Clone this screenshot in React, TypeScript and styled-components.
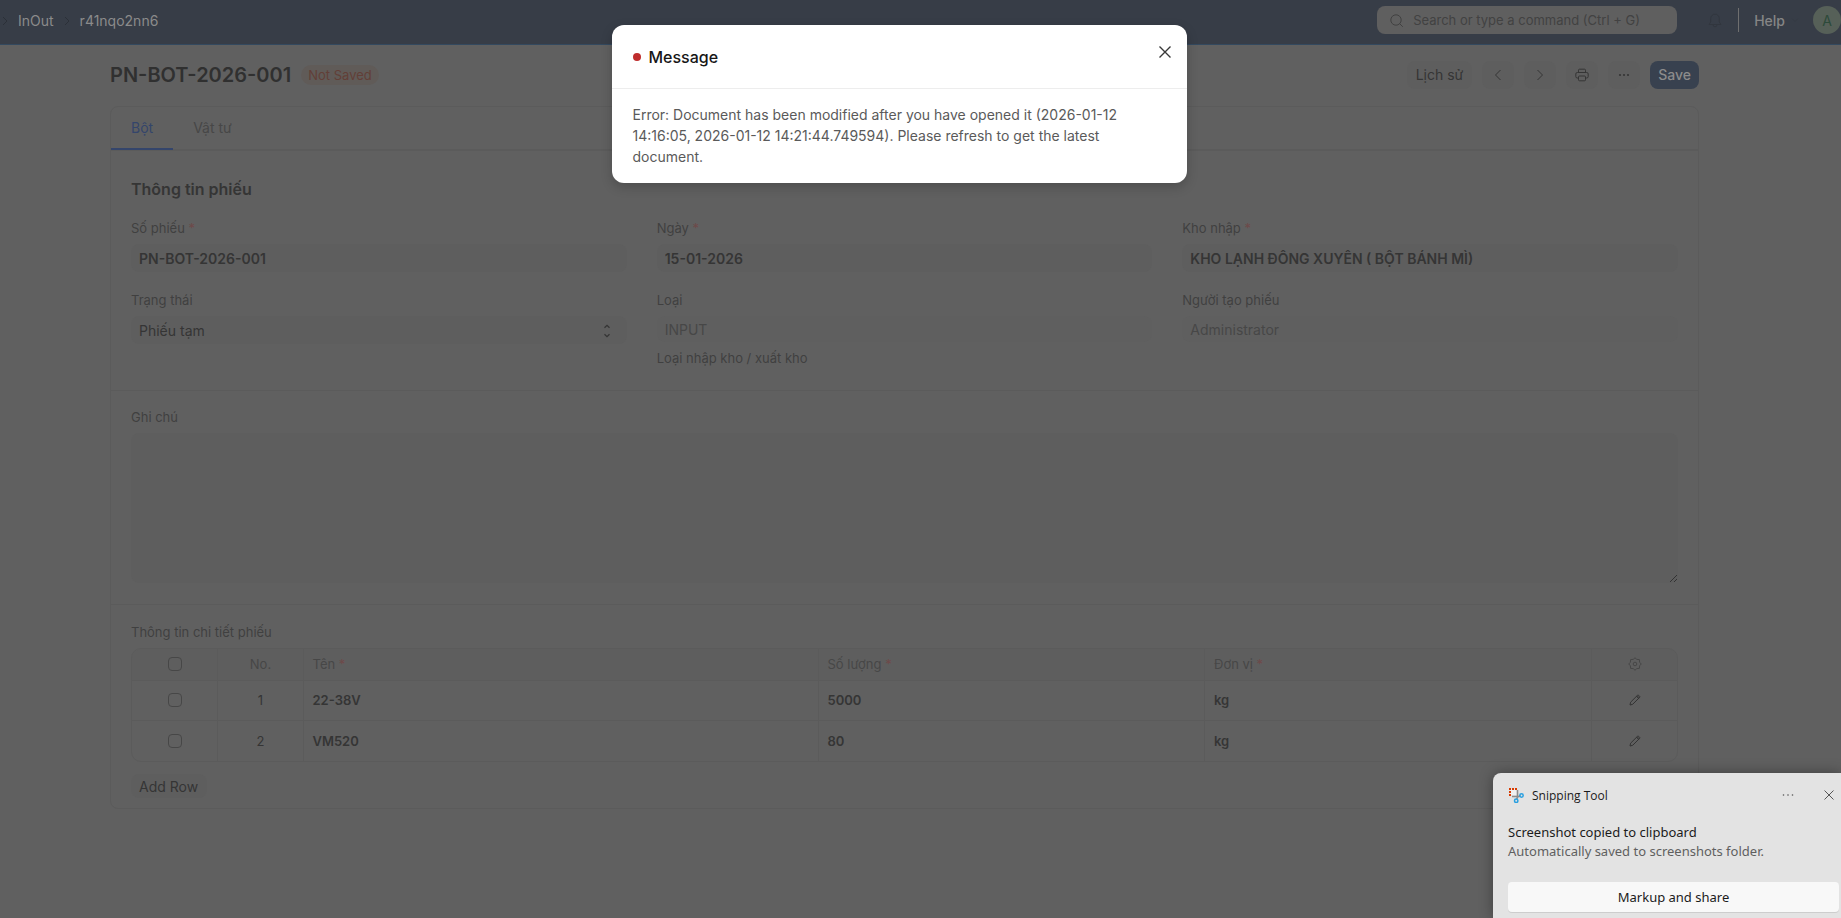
import React from "react";
import styled, { createGlobalStyle } from "styled-components";

const c = {
  page: "#606060",
  nav: "#373d47",
  navLine: "#33495f",
  line: "#5b5b5b",
  control: "#5e5e5e",
  ink: "#353535",
  label: "#404040",
  muted: "#474747",
  red: "#6e4949",
};

const Global = createGlobalStyle`
  * { box-sizing: border-box; }
  html, body { margin: 0; min-height: 100%; background: ${c.page}; }
  body, button, input, select, textarea { font-family: Inter, "Liberation Sans", sans-serif; }
  body { color: ${c.ink}; font-size: 14px; overflow: hidden; }
  button { border: 0; padding: 0; background: none; cursor: pointer; color: inherit; }
  svg { display: block; flex: none; }
`;

const Screen = styled.div`
  position: relative;
  min-height: 100vh;
`;

const Navbar = styled.header`
  display: flex;
  align-items: center;
  height: 45px;
  padding-bottom: 4px;
  background: ${c.nav};
  border-bottom: 1px solid ${c.navLine};
`;

const Crumbs = styled.nav`
  display: flex;
  align-items: center;
  flex: 1;
  padding-top: 2px;
`;

const Crumb = styled.a`
  color: #8b8b8b;
  text-decoration: none;
  font-size: 14px;
  line-height: 20px;
`;

const CrumbArrow = styled.svg<{ $first?: boolean }>`
  width: 6px;
  height: 10px;
  margin: 0 10px 0 ${(p) => (p.$first ? 2 : 10)}px;
  fill: none;
  stroke: #2b3038;
`;

const Search = styled.label`
  display: flex;
  align-items: center;
  width: 300px;
  height: 28px;
  margin-right: 30px;
  padding: 0 13px;
  gap: 10px;
  border-radius: 8px;
  background: #5f5f5f;
  color: #414141;
`;

const SearchInput = styled.input`
  flex: 1;
  min-width: 0;
  border: 0;
  padding: 0;
  background: none;
  font-size: 13px;
  color: #404040;
  &::placeholder { color: #424242; opacity: 1; }
`;

const BellButton = styled.button`
  width: 16px;
  height: 16px;
  color: #31363e;
`;

const NavRule = styled.span`
  width: 1px;
  height: 24px;
  margin: 0 15px;
  background: #6f6f6f;
`;

const HelpButton = styled.button`
  display: flex;
  align-items: center;
  gap: 6px;
  margin-right: 14px;
  font-size: 14px;
  font-weight: 500;
  color: #858585;
`;

const Avatar = styled.button`
  width: 28px;
  height: 28px;
  border-radius: 50%;
  background: #566058;
  color: #2c4a3a;
  font-size: 14px;
`;

const Container = styled.div`
  padding: 0 142px 0 110px;
`;

const PageHead = styled.div`
  display: flex;
  align-items: center;
  height: 61px;
  padding-bottom: 2px;
`;

const Title = styled.h1`
  margin: 0;
  font-size: 20px;
  line-height: 28px;
  font-weight: 600;
  color: #303030;
`;

const Pill = styled.span`
  margin: 0 auto 0 10px;
  padding: 0 7px;
  border-radius: 10px;
  background: #605b58;
  color: #623f37;
  font-size: 13px;
  line-height: 20px;
`;

const Actions = styled.div`
  display: flex;
  gap: 10px;
`;

const ActionButton = styled.button<{ $primary?: boolean; $icon?: boolean }>`
  display: flex;
  align-items: center;
  justify-content: center;
  height: 28px;
  width: ${(p) => (p.$icon ? "32px" : "auto")};
  padding: 0 ${(p) => (p.$icon ? 0 : p.$primary ? 8 : 9)}px;
  border-radius: 8px;
  font-size: 14px;
  font-weight: ${(p) => (p.$primary ? 500 : 400)};
  background: ${(p) => (p.$primary ? "#38414f" : c.control)};
  color: ${(p) => (p.$primary ? "#8b8b8b" : c.ink)};
`;

const Card = styled.main`
  border: 1px solid ${c.line};
  border-radius: 8px;
`;

const Tabs = styled.div`
  display: flex;
  height: 44px;
  border-bottom: 2px solid ${c.line};
`;

const Tab = styled.button<{ $active?: boolean }>`
  height: 43px;
  padding: 0 20px 1px;
  border-bottom: 2px solid ${(p) => (p.$active ? "#34456b" : "transparent")};
  font-size: 14px;
  color: ${(p) => (p.$active ? "#34456b" : c.muted)};
`;

const Section = styled.section<{ $top: number; $bottom: number }>`
  padding: ${(p) => p.$top}px 20px ${(p) => p.$bottom}px;
  & + & { border-top: 1px solid ${c.line}; }
`;

const SectionTitle = styled.h2`
  margin: 0 0 21px;
  font-size: 16px;
  line-height: 20px;
  font-weight: 600;
  color: ${c.ink};
`;

const FieldGrid = styled.div`
  display: grid;
  grid-template-columns: repeat(3, 1fr);
  gap: 20px 30px;
`;

const Field = styled.div`
  display: flex;
  flex-direction: column;
`;

const Label = styled.label`
  margin-bottom: 8px;
  font-size: 13px;
  line-height: 16px;
  color: ${c.label};
`;

const Star = styled.span`
  color: ${c.red};
`;

const Input = styled.input<{ $quiet?: boolean }>`
  width: 100%;
  height: ${(p) => (p.$quiet ? 26 : 28)}px;
  padding: 0 8px;
  border: 0;
  border-radius: 8px;
  background: ${(p) => (p.$quiet ? "#5f5f5f" : c.control)};
  font-size: 14px;
  font-weight: ${(p) => (p.$quiet ? 400 : 600)};
  color: ${(p) => (p.$quiet ? c.muted : c.ink)};
`;

const SelectWrap = styled.div`
  position: relative;
`;

const Select = styled.select`
  appearance: none;
  width: 100%;
  height: 28px;
  padding: 0 8px;
  border: 0;
  border-radius: 8px;
  background: ${c.control};
  font-size: 14px;
  color: ${c.ink};
`;

const SelectArrows = styled.svg`
  position: absolute;
  right: 16px;
  top: 8px;
  pointer-events: none;
`;

const Help = styled.p`
  margin: 8px 0 0;
  font-size: 13px;
  line-height: 16px;
  color: ${c.label};
`;

const Notes = styled.textarea`
  display: block;
  width: 100%;
  height: 150px;
  border: 0;
  border-radius: 8px;
  background: ${c.control};
  resize: none;
`;

const NotesWrap = styled.div`
  position: relative;
`;

const Grip = styled.svg`
  position: absolute;
  right: 0;
  bottom: 0;
`;

const GridFrame = styled.div`
  border: 1px solid ${c.line};
  border-radius: 10px;
  overflow: hidden;
`;

const Table = styled.table`
  width: 100%;
  table-layout: fixed;
  border-collapse: collapse;
  font-size: 13px;
  thead tr { height: 31px; background: #5e5e5e; }
  tbody tr { height: 40px; border-top: 1px solid ${c.line}; }
  tbody tr:last-child { height: 41px; }
`;

const Cell = styled.td<{ $center?: boolean; $bold?: boolean; $muted?: boolean }>`
  padding: 0 8px 0 9px;
  text-align: ${(p) => (p.$center ? "center" : "left")};
  font-weight: ${(p) => (p.$bold ? 600 : 400)};
  color: ${(p) => (p.$muted ? c.muted : c.ink)};
  & + & { border-left: 1px solid ${c.line}; }
  svg { margin: 0 auto; }
`;

const Check = styled.input`
  appearance: none;
  display: block;
  width: 14px;
  height: 14px;
  margin: 0 auto;
  border: 1px solid #474747;
  border-radius: 4px;
`;

const AddRow = styled.button`
  height: 24px;
  margin-top: 12px;
  padding: 0 9px 0 8px;
  border-radius: 8px;
  background: ${c.control};
  font-size: 14px;
  color: ${c.ink};
`;

const Dialog = styled.div`
  position: absolute;
  top: 25px;
  left: calc(50% - 309px);
  width: 575px;
  border-radius: 12px;
  background: #fff;
  box-shadow: 0 4px 12px rgba(0, 0, 0, 0.2);
`;

const DialogHead = styled.div`
  display: flex;
  align-items: center;
  height: 64px;
  padding: 0 14px 0 21px;
  border-bottom: 1px solid #ededed;
`;

const Dot = styled.span`
  width: 8px;
  height: 8px;
  margin-right: 8px;
  border-radius: 50%;
  background: #bf2d2d;
`;

const DialogTitle = styled.h2`
  flex: 1;
  margin: 0;
  font-size: 16px;
  line-height: 24px;
  font-weight: 500;
  color: #171717;
`;

const CloseButton = styled.button`
  align-self: flex-start;
  padding-top: 19px;
  color: #383838;
`;

const DialogBody = styled.p`
  margin: 0;
  padding: 15px 60px 16px 21px;
  font-size: 14px;
  line-height: 21px;
  color: #5a5a5a;
`;

const Toast = styled.aside`
  position: absolute;
  right: 0;
  bottom: 0;
  width: 348px;
  padding: 12px 2px 6px 15px;
  border-top-left-radius: 8px;
  background: #e3e3e3;
  box-shadow: 0 0 14px rgba(0, 0, 0, 0.35);
  font-family: "Noto Sans", "Open Sans", sans-serif;
  color: #1b1b1b;
`;

const ToastHead = styled.div`
  display: flex;
  align-items: center;
  height: 20px;
  gap: 8px;
  padding-right: 5px;
  font-family: "Open Sans", "Noto Sans", sans-serif;
  font-size: 12px;
`;

const ToastName = styled.span`
  flex: 1;
`;

const ToastIcon = styled.button`
  color: #555;
  margin-left: 22px;
`;

const ToastTitle = styled.p`
  margin: 18px 0 0;
  font-size: 13px;
  line-height: 19px;
`;

const ToastText = styled(ToastTitle)`
  margin: 0 0 21px;
  color: #5f5f5f;
`;

const ToastButton = styled.button`
  width: 100%;
  height: 30px;
  border-radius: 4px;
  background: #f8f8f8;
  box-shadow: 0 1px 0 #cdcdcd;
  font-family: inherit;
  font-size: 13px;
  color: #1b1b1b;
`;

const Gear = () => (
  <svg width="14" height="14" viewBox="0 0 14 14" fill="none" stroke={c.muted} strokeLinejoin="round">
    <path d="M7 .7L8.600 2.400L11.400 2.600L11.600 5.400L13.300 7L11.600 8.600L11.400 11.400L8.600 11.600L7 13.300L5.400 11.600L2.600 11.400L2.400 8.600L.7 7L2.400 5.400L2.600 2.600L5.400 2.400z" />
    <circle cx="7" cy="7" r="1.800" />
  </svg>
);

const Pencil = () => (
  <svg width="12" height="12" viewBox="0 0 12 12" fill="none" stroke="#333" strokeLinejoin="round">
    <path d="M1 11l.6-2.800L8.500 1.300a.8.8 0 0 1 1.100 0l1 1a.8.8 0 0 1 0 1.100L3.700 10.300z" />
    <path d="M7.500 2.300l2.200 2.200M8.300 1.900l1.900 1.900" />
  </svg>
);

const rows = [
  { no: 1, name: "22-38V", qty: "5000", unit: "kg" },
  { no: 2, name: "VM520", qty: "80", unit: "kg" },
];

const fields = [
  { id: "no", label: "Số phiếu", value: "PN-BOT-2026-001" },
  { id: "date", label: "Ngày", value: "15-01-2026" },
  { id: "store", label: "Kho nhập", value: "KHO LẠNH ĐÔNG XUYÊN ( BỘT BÁNH MÌ)" },
];

export default function App() {
  return (
    <Screen>
      <Global />
      <Navbar>
        <Crumbs aria-label="Breadcrumb">
          <CrumbArrow $first viewBox="0 0 6 10"><path d="M1 1l4 4-4 4" /></CrumbArrow>
          <Crumb href="#">InOut</Crumb>
          <CrumbArrow viewBox="0 0 6 10"><path d="M1 1l4 4-4 4" /></CrumbArrow>
          <Crumb href="#">r41nqo2nn6</Crumb>
        </Crumbs>
        <Search>
          <svg width="13" height="13" viewBox="0 0 13 13" fill="none" stroke="currentColor">
            <circle cx="6" cy="6" r="5.200" />
            <path d="M9.800 9.800L12.500 12.500" strokeLinecap="round" />
          </svg>
          <SearchInput aria-label="Search" placeholder="Search or type a command (Ctrl + G)" />
        </Search>
        <BellButton aria-label="Notifications">
          <svg width="16" height="16" viewBox="0 0 16 16" fill="none" stroke="currentColor">
            <path d="M2 12.500h12l-1.700-2.500V6.500a4.300 4.300 0 0 0-8.600 0V10zM6 12.800a2 2 0 0 0 4 0" />
          </svg>
        </BellButton>
        <NavRule />
        <HelpButton>
          Help
          <svg width="8" height="8" viewBox="0 0 8 8" fill="none" stroke="#343a43"><path d="M1 2.500l3 3 3-3" /></svg>
        </HelpButton>
        <Avatar aria-label="Account">A</Avatar>
      </Navbar>

      <Container>
        <PageHead>
          <Title>PN-BOT-2026-001</Title>
          <Pill>Not Saved</Pill>
          <Actions>
            <ActionButton>Lịch sử</ActionButton>
            <ActionButton $icon aria-label="Previous">
              <svg width="8" height="12" viewBox="0 0 8 12" fill="none" stroke="currentColor"><path d="M6.500 1L1.500 6l5 5" /></svg>
            </ActionButton>
            <ActionButton $icon aria-label="Next">
              <svg width="8" height="12" viewBox="0 0 8 12" fill="none" stroke="currentColor"><path d="M1.500 1l5 5-5 5" /></svg>
            </ActionButton>
            <ActionButton $icon aria-label="Print">
              <svg width="14" height="14" viewBox="0 0 14 14" fill="none" stroke="currentColor">
                <path d="M3.500 4.500V2.200a1 1 0 0 1 1-1h5a1 1 0 0 1 1 1v2.300M3.500 10H2.300A1.500 1.500 0 0 1 .8 8.500V6a1.500 1.500 0 0 1 1.500-1.500h9.400A1.500 1.500 0 0 1 13.200 6v2.500a1.500 1.500 0 0 1-1.500 1.500h-1.200" />
                <rect x="3.500" y="8" width="7" height="4.800" rx="1" />
              </svg>
            </ActionButton>
            <ActionButton $icon aria-label="More">
              <svg width="12" height="4" viewBox="0 0 12 4" fill="currentColor"><circle cx="2" cy="2" r="1.100" /><circle cx="6" cy="2" r="1.100" /><circle cx="10" cy="2" r="1.100" /></svg>
            </ActionButton>
            <ActionButton $primary>Save</ActionButton>
          </Actions>
        </PageHead>

        <Card>
          <Tabs role="tablist">
            <Tab $active role="tab" aria-selected="true">Bột</Tab>
            <Tab role="tab" aria-selected="false">Vật tư</Tab>
          </Tabs>
          <Section $top={28} $bottom={24}>
            <SectionTitle>Thông tin phiếu</SectionTitle>
            <FieldGrid>
              {fields.map((f) => (
                <Field key={f.id}>
                  <Label htmlFor={f.id}>{f.label} <Star>*</Star></Label>
                  <Input id={f.id} defaultValue={f.value} />
                </Field>
              ))}
              <Field>
                <Label htmlFor="status">Trạng thái</Label>
                <SelectWrap>
                  <Select id="status"><option>Phiếu tạm</option></Select>
                  <SelectArrows width="8" height="14" viewBox="0 0 8 14" fill="none" stroke={c.ink} strokeWidth="1.300">
                    <path d="M1.500 3.800L4 1.300l2.500 2.500M1.500 10.200L4 12.700l2.500-2.500" />
                  </SelectArrows>
                </SelectWrap>
              </Field>
              <Field>
                <Label htmlFor="kind">Loại</Label>
                <Input id="kind" $quiet readOnly value="INPUT" />
                <Help>Loại nhập kho / xuất kho</Help>
              </Field>
              <Field>
                <Label htmlFor="creator">Người tạo phiếu</Label>
                <Input id="creator" $quiet readOnly value="Administrator" />
              </Field>
            </FieldGrid>
          </Section>
          <Section $top={18} $bottom={21}>
            <Field>
              <Label htmlFor="notes">Ghi chú</Label>
              <NotesWrap>
                <Notes id="notes" />
                <Grip width="10" height="10" viewBox="0 0 10 10" stroke="#333"><path d="M2 9l7-7M6 9l3-3" /></Grip>
              </NotesWrap>
            </Field>
          </Section>
          <Section $top={19} $bottom={10}>
            <Field>
              <Label as="div">Thông tin chi tiết phiếu</Label>
              <GridFrame>
                <Table>
                  <colgroup>
                    <col style={{ width: 85 }} />
                    <col style={{ width: 86 }} />
                    <col style={{ width: 515 }} />
                    <col />
                    <col />
                    <col style={{ width: 86 }} />
                  </colgroup>
                  <thead>
                    <tr>
                      <Cell as="th" $muted><Check type="checkbox" aria-label="Select all" /></Cell>
                      <Cell as="th" $center $muted>No.</Cell>
                      <Cell as="th" $muted>Tên <Star>*</Star></Cell>
                      <Cell as="th" $muted>Số lượng <Star>*</Star></Cell>
                      <Cell as="th" $muted>Đơn vị <Star>*</Star></Cell>
                      <Cell as="th" $muted><Gear /></Cell>
                    </tr>
                  </thead>
                  <tbody>
                    {rows.map((r) => (
                      <tr key={r.no}>
                        <Cell><Check type="checkbox" aria-label={`Select row ${r.no}`} /></Cell>
                        <Cell $center>{r.no}</Cell>
                        <Cell $bold>{r.name}</Cell>
                        <Cell $bold>{r.qty}</Cell>
                        <Cell $bold>{r.unit}</Cell>
                        <Cell><Pencil /></Cell>
                      </tr>
                    ))}
                  </tbody>
                </Table>
              </GridFrame>
            </Field>
            <AddRow>Add Row</AddRow>
          </Section>
        </Card>
      </Container>

      <Dialog role="dialog" aria-labelledby="dialog-title">
        <DialogHead>
          <Dot />
          <DialogTitle id="dialog-title">Message</DialogTitle>
          <CloseButton aria-label="Close">
            <svg width="16" height="16" viewBox="0 0 16 16" fill="none" stroke="currentColor" strokeWidth="1.400"><path d="M2.500 2.500l11 11M13.500 2.500l-11 11" /></svg>
          </CloseButton>
        </DialogHead>
        <DialogBody>
          Error: Document has been modified after you have opened it (2026-01-12 14:16:05, 2026-01-12 14:21:44.749594). Please refresh to get the latest document.
        </DialogBody>
      </Dialog>

      <Toast role="status">
        <ToastHead>
          <svg width="16" height="16" viewBox="0 0 16 16">
            <path d="M2 2h7v6H2z" fill="#f0f0f0" />
            <path d="M1 1h2v2H1zM4 1h2v2H4zM7 1h2v2H7zM1 4h2v2H1zM1 7h2v2H1z" fill="#d83b01" />
            <path d="M9.500 3v7.500L8.500 12M4 9.500h7l1.500-1" fill="none" stroke="#8c8c8c" strokeWidth="1.600" />
            <circle cx="13.500" cy="8.500" r="1.700" fill="none" stroke="#2aa0e0" strokeWidth="1.500" />
            <circle cx="8.200" cy="13.800" r="1.700" fill="none" stroke="#2aa0e0" strokeWidth="1.500" />
          </svg>
          <ToastName>Snipping Tool</ToastName>
          <ToastIcon aria-label="More options">
            <svg width="12" height="10" viewBox="0 0 12 10" fill="currentColor"><circle cx="1.500" cy="5" r=".8" /><circle cx="6" cy="5" r=".8" /><circle cx="10.500" cy="5" r=".8" /></svg>
          </ToastIcon>
          <ToastIcon aria-label="Dismiss">
            <svg width="10" height="10" viewBox="0 0 10 10" stroke="currentColor"><path d="M.5.5l9 9M9.500.5l-9 9" /></svg>
          </ToastIcon>
        </ToastHead>
        <ToastTitle>Screenshot copied to clipboard</ToastTitle>
        <ToastText>Automatically saved to screenshots folder.</ToastText>
        <ToastButton>Markup and share</ToastButton>
      </Toast>
    </Screen>
  );
}
